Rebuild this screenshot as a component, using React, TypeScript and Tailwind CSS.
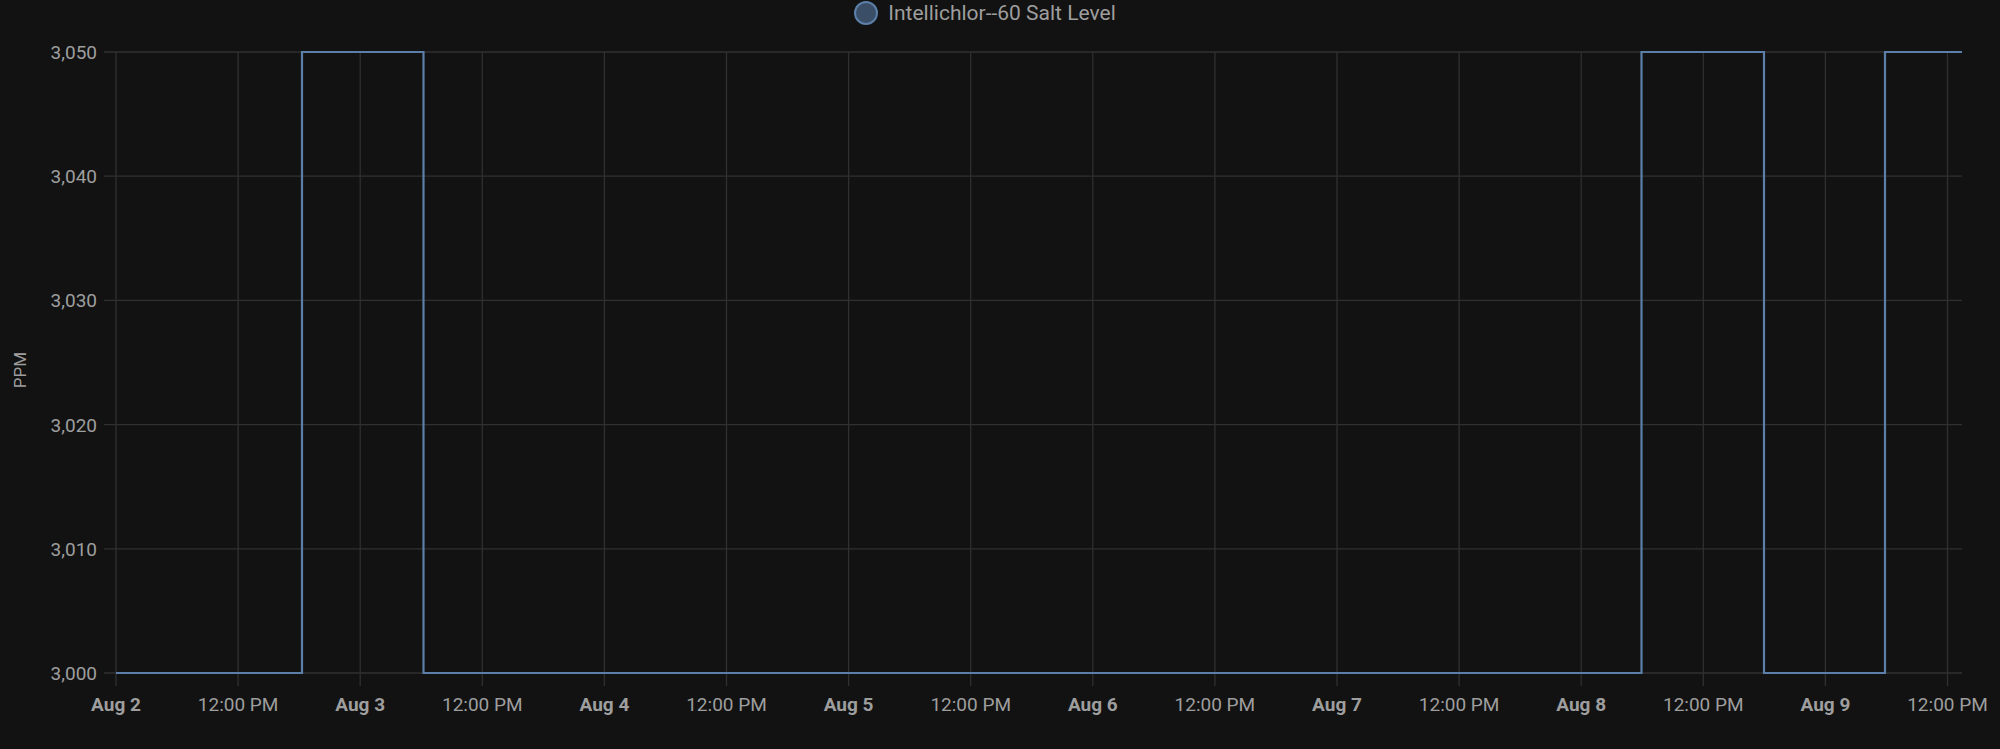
const X0 = 116;
const DAY = 244.2;
const Y0 = 52;
const YSTEP = 124.2;
const X_END = 1962;

const yLabels = ["3,050", "3,040", "3,030", "3,020", "3,010", "3,000"];
const xTicks = Array.from({ length: 16 }, (_, i) => ({
  x: X0 + (i * DAY) / 2,
  label: i % 2 === 0 ? `Aug ${2 + i / 2}` : "12:00 PM",
  bold: i % 2 === 0,
}));

const hi = Y0;
const lo = Y0 + 5 * YSTEP;
const steps = [
  [X0, lo], [302, lo], [302, hi], [423.5, hi], [423.5, lo], [1641.5, lo], [1641.5, hi],
  [1764, hi], [1764, lo], [1885, lo], [1885, hi], [X_END, hi],
];

export default function App() {
  return (
    <div className="w-[2000px] h-[749px] bg-[#121212] flex flex-col font-[Roboto,sans-serif] text-[#9e9e9e] overflow-hidden">
      <div className="flex items-center justify-center gap-[10px] h-[26px] pr-[30px]">
        <span className="w-[24px] h-[24px] rounded-full bg-[#3a4e68] border-2 border-[#5b7fa8]" />
        <span className="text-[21px] leading-none">Intellichlor--60 Salt Level</span>
      </div>
      <svg width="2000" height="723" viewBox="0 26 2000 723" className="block font-[Roboto,sans-serif]">
        {yLabels.map((l, i) => (
          <g key={l}>
            <line x1={X0 - 12} x2={X_END} y1={Y0 + i * YSTEP} y2={Y0 + i * YSTEP} stroke="#303030" strokeWidth="1.3" />
            <text x={97} y={Y0 + i * YSTEP + 7} textAnchor="end" fontFamily="Roboto, sans-serif" fontSize="19" fill="#9e9e9e">{l}</text>
          </g>
        ))}
        {xTicks.map((t) => (
          <g key={t.x}>
            <line x1={t.x} x2={t.x} y1={Y0} y2={lo + 13} stroke="#303030" strokeWidth="1.3" />
            <text x={t.x} y={711} textAnchor="middle" fontFamily="Roboto, sans-serif" fontSize="19" fontWeight={t.bold ? 700 : 400} fill="#9e9e9e">{t.label}</text>
          </g>
        ))}
        <text x={26} y={370} fontSize="17" fontFamily="Roboto, sans-serif" fill="#9e9e9e" textAnchor="middle" transform="rotate(-90 26 370)">PPM</text>
        <polyline points={steps.map((p) => p.join(",")).join(" ")} fill="none" stroke="#5b7fa8" strokeWidth="2.2" />
      </svg>
    </div>
  );
}
